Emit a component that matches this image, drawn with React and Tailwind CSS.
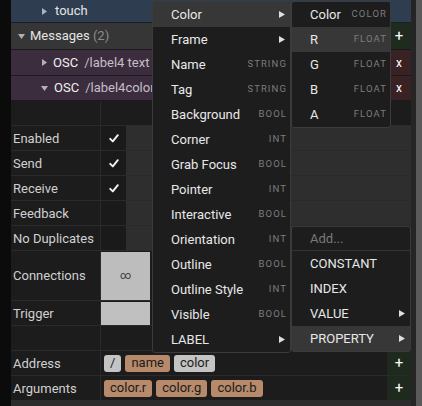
import React from 'react';

const TriRight = ({ className = '' }) => (
  <svg width="5" height="7" viewBox="0 0 5 7" className={className}>
    <path d="M0 0L5 3.5L0 7Z" fill="currentColor" />
  </svg>
);

const TriDown = ({ className = '' }) => (
  <svg width="7" height="5" viewBox="0 0 7 5" className={className}>
    <path d="M0 0L7 0L3.5 5Z" fill="currentColor" />
  </svg>
);

const MenuArrow = () => (
  <svg width="6" height="7" viewBox="0 0 6 7" className="text-[#dedede]">
    <path d="M0 0L6 3.5L0 7Z" fill="currentColor" />
  </svg>
);

const Check = () => (
  <svg width="10" height="9" viewBox="0 0 10 9">
    <path d="M1.2 4.8L3.8 7.4L8.8 1.2" fill="none" stroke="#f2f2f2" strokeWidth="1.9" strokeLinecap="round" strokeLinejoin="round" />
  </svg>
);

const propMenu = [
  { label: 'Color', sub: true, active: true },
  { label: 'Frame', sub: true },
  { label: 'Name', type: 'STRING' },
  { label: 'Tag', type: 'STRING' },
  { label: 'Background', type: 'BOOL' },
  { label: 'Corner', type: 'INT' },
  { label: 'Grab Focus', type: 'BOOL' },
  { label: 'Pointer', type: 'INT' },
  { label: 'Interactive', type: 'BOOL' },
  { label: 'Orientation', type: 'INT' },
  { label: 'Outline', type: 'BOOL' },
  { label: 'Outline Style', type: 'INT' },
  { label: 'Visible', type: 'BOOL' },
  { label: 'LABEL', sub: true },
];

const colorMenu = [
  { label: 'Color', type: 'COLOR' },
  { label: 'R', type: 'FLOAT', active: true },
  { label: 'G', type: 'FLOAT' },
  { label: 'B', type: 'FLOAT' },
  { label: 'A', type: 'FLOAT' },
];

const addMenu = [
  { label: 'CONSTANT' },
  { label: 'INDEX' },
  { label: 'VALUE', sub: true },
  { label: 'PROPERTY', sub: true, active: true },
];

const MenuItem = ({ label, type, sub, active }) => (
  <div className={`flex h-[25px] items-center justify-between pl-[18px] pr-[3px] ${active ? 'bg-[#373737]' : ''}`}>
    <span className="text-[#e8e8e8]">{label}</span>
    {type && <span className="text-[9.5px] tracking-[1.1px] text-[#7c7c7c]">{type}</span>}
    {sub && <span className="pr-[2px]"><MenuArrow /></span>}
  </div>
);

const Chip = ({ children, gray }) => (
  <div className={`flex h-[17px] items-center rounded-[3px] px-[6px] text-[13px] text-[#1b1b1b] ${gray ? 'bg-[#c4c4c4]' : 'bg-[#b68a6a]'}`}>
    {children}
  </div>
);

const PropRow = ({ label, h = 'h-[25px]', children }) => (
  <div className={`flex ${h} border-b border-[#2a2a2a]`}>
    <div className="flex w-[90px] shrink-0 items-center border-r border-[#2a2a2a] pl-[2px] pt-[1px] text-[#d0d0d0]">{label}</div>
    <div className="flex flex-1">{children}</div>
  </div>
);

const CheckRow = ({ label, checked }) => (
  <PropRow label={label}>
    <div className="flex w-[25px] items-center justify-center bg-[#1a1a1a]">{checked && <Check />}</div>
    <div className="flex-1 bg-[#2e2e2e]" />
  </PropRow>
);

export default function App() {
  return (
    <div className="relative flex h-[406px] w-[422px] overflow-hidden bg-[#0b0b0b] font-[Roboto,sans-serif] text-[13px] text-[#e4e4e4]">
      <div className="w-[11px] shrink-0" />
      <div className="flex w-[400px] shrink-0 flex-col bg-[#1c1c1c]">
        <div className="flex h-[23px] items-center gap-[8px] border-b border-[#1a1f26] bg-[#2f3d50] pl-[31px]">
          <TriRight className="text-[#a9b3bf]" />
          <span>touch</span>
        </div>
        <div className="flex h-[27px] border-b border-[#1a1a1a] bg-[#363636]">
          <div className="flex flex-1 items-center gap-[5px] pl-[7px]">
            <TriDown className="text-[#b0b0b0]" />
            <span>Messages <span className="text-[#8c8c8c]">(2)</span></span>
          </div>
          <div className="flex w-[24px] items-center justify-center bg-[#1f2b1f] text-[15px] text-white">+</div>
        </div>
        {[
          { path: '/label4 text', open: false, h: 'h-[26px]' },
          { path: '/label4color', open: true, h: 'h-[25px]' },
        ].map((m) => (
          <div key={m.path} className={`flex ${m.h} border-b border-[#1a1a1a] bg-[#3b2d3d]`}>
            <div className="flex flex-1 items-center pl-[30px]">
              {m.open ? <TriDown className="text-[#b8aeb9]" /> : <TriRight className="ml-[1px] text-[#b8aeb9]" />}
              <span className="ml-[6px] text-[#f0f0f0]">OSC</span>
              <span className="ml-[6px] text-[#c7bec8]">{m.path}</span>
            </div>
            <div className="flex w-[24px] items-center justify-center bg-[#3a2124] text-[12px] text-white">x</div>
          </div>
        ))}
        <PropRow label="">
          <div className="flex-1" />
        </PropRow>
        <CheckRow label="Enabled" checked />
        <CheckRow label="Send" checked />
        <CheckRow label="Receive" checked />
        <CheckRow label="Feedback" />
        <CheckRow label="No Duplicates" />
        <PropRow label="Connections" h="h-[50px]">
          <div className="flex w-[49px] items-center justify-center border-t border-[#1c1c1c] bg-[#bdbdbd] text-[11px] text-[#3a3a3a]">∞</div>
        </PropRow>
        <PropRow label="Trigger">
          <div className="w-[49px] border-t border-[#1c1c1c] bg-[#c0c0c0]" />
        </PropRow>
        <PropRow label="">
          <div className="flex-1" />
        </PropRow>
        <PropRow label="Address">
          <div className="flex flex-1 items-center gap-[4px] pl-[3px]">
            <Chip gray>/</Chip>
            <Chip>name</Chip>
            <Chip gray>color</Chip>
          </div>
          <div className="flex w-[24px] items-center justify-center bg-[#1d2a1d] text-[15px] text-white">+</div>
        </PropRow>
        <PropRow label="Arguments">
          <div className="flex flex-1 items-center gap-[4px] pl-[3px]">
            <Chip>color.r</Chip>
            <Chip>color.g</Chip>
            <Chip>color.b</Chip>
          </div>
          <div className="flex w-[24px] items-center justify-center bg-[#1d2a1d] text-[15px] text-white">+</div>
        </PropRow>
        <div className="flex-1 bg-[#2c2c2c]" />
      </div>
      <div className="w-[5px] shrink-0 bg-[#252525]" />
      <div className="w-[6px] shrink-0 bg-[#5a5a5a]" />

      <div className="absolute left-[152px] top-[1px] w-[139px] rounded-[3px] border border-[#3b3b3b] bg-[#1d1d1d]">
        {propMenu.map((it) => (
          <MenuItem key={it.label} {...it} />
        ))}
      </div>

      <div className="absolute left-[291px] top-[1px] w-[100px] rounded-[3px] border border-[#3b3b3b] bg-[#1d1d1d]">
        {colorMenu.map((it) => (
          <MenuItem key={it.label} {...it} />
        ))}
      </div>

      <div className="absolute left-[291px] top-[226px] w-[120px] rounded-[3px] border border-[#3b3b3b] bg-[#1d1d1d]">
        <div className="flex h-[24px] items-center border-b border-[#333] pl-[18px] text-[#7a7a7a]">Add...</div>
        {addMenu.map((it) => (
          <MenuItem key={it.label} {...it} />
        ))}
      </div>
    </div>
  );
}
